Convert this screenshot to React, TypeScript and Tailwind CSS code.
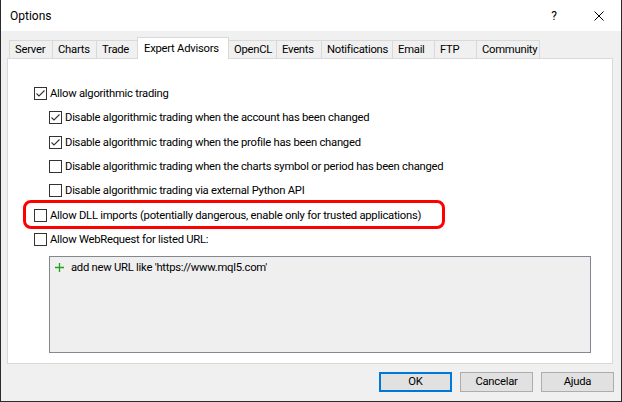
import React from 'react';

const tabs = [
    { label: 'Server', w: 'w-[43px]' },
    { label: 'Charts', w: 'w-[44px]' },
    { label: 'Trade', w: 'w-[41px]' },
    { label: 'Expert Advisors', w: 'w-[92px]', active: true },
    { label: 'OpenCL', w: 'w-[47px]' },
    { label: 'Events', w: 'w-[45px]' },
    { label: 'Notifications', w: 'w-[71px]' },
    { label: 'Email', w: 'w-[42px]' },
    { label: 'FTP', w: 'w-[42px]' },
    { label: 'Community', w: 'w-[64px]' },
];

const options = [
    { label: 'Allow algorithmic trading', checked: true },
    { label: 'Disable algorithmic trading when the account has been changed', checked: true, sub: true },
    { label: 'Disable algorithmic trading when the profile has been changed', checked: true, sub: true },
    { label: 'Disable algorithmic trading when the charts symbol or period has been changed', sub: true },
    { label: 'Disable algorithmic trading via external Python API', sub: true },
    { label: 'Allow DLL imports (potentially dangerous, enable only for trusted applications)', highlight: true },
    { label: 'Allow WebRequest for listed URL:' },
];

const CheckBox: React.FC<{ checked?: boolean }> = ({ checked }) => (
    <span className="w-[13px] h-[13px] shrink-0 border border-[#333333] bg-white flex items-center justify-center">
        {checked && (
            <svg width="11" height="11" viewBox="0 0 11 11">
                <polyline points="1.5,5.5 4,8 9.5,2.5" fill="none" stroke="#333333" strokeWidth="1.1" />
            </svg>
        )}
    </span>
);

const App: React.FC = () => {
    return (
        <div className="w-[622px] h-[402px] bg-[#f0f0f0] border-x border-b border-[#2b2b2b] flex flex-col font-['Roboto','Noto_Sans',sans-serif] text-[11.25px] tracking-[-0.25px] text-black leading-none">
            {/* title bar */}
            <div className="h-[31px] shrink-0 bg-white flex items-center">
                <span className="pl-[9px] text-[12px] tracking-normal">Options</span>
                <span className="ml-auto text-[12px] w-[10px] text-center">?</span>
                <span className="ml-[35px] mr-[17px] w-[10px] h-[10px]">
                    <svg width="10" height="10" viewBox="0 0 10 10">
                        <path d="M0.5 0.5 L9.5 9.5 M9.5 0.5 L0.5 9.5" stroke="#000" strokeWidth="1" />
                    </svg>
                </span>
            </div>

            <div className="flex-1 flex flex-col pl-[6px] pr-[8px]">
                {/* tabs */}
                <div className="flex items-end h-[27px] pl-[2px]">
                    {tabs.map((t, i) => {
                        const prevActive = i > 0 && tabs[i - 1].active;
                        const last = i === tabs.length - 1;
                        return t.active ? (
                            <div
                                key={t.label}
                                className={`${t.w} h-[22px] -mb-px relative z-10 bg-white border-l border-t border-r border-[#d9d9d9] flex items-center pl-[6px]`}
                            >
                                {t.label}
                            </div>
                        ) : (
                            <div
                                key={t.label}
                                className={`${t.w} h-[18px] border-t border-[#d9d9d9] ${prevActive ? '' : 'border-l'} ${last ? 'border-r' : ''} flex items-center pl-[5px] pt-[1px] whitespace-nowrap`}
                            >
                                {t.label}
                            </div>
                        );
                    })}
                </div>

                {/* panel */}
                <div className="h-[306px] shrink-0 bg-white border border-[#d9d9d9] pt-[22.5px] pl-[26px]">
                    {options.map((o) => (
                        <div key={o.label} className={`h-[24.33px] flex items-center ${o.sub ? 'pl-[15px]' : ''}`}>
                            <div className="relative flex items-center gap-[3px]">
                                {o.highlight && (
                                    <span className="absolute -left-[11px] -top-[9px] w-[422px] h-[29px] border-[3px] border-[#ff0000] rounded-[8px] pointer-events-none" />
                                )}
                                <CheckBox checked={o.checked} />
                                <span className="whitespace-nowrap">{o.label}</span>
                            </div>
                        </div>
                    ))}
                    <div className="mt-[4px] ml-[15px] w-[542px] h-[97px] bg-[#efefef] border border-[#828790]">
                        <div className="h-[22px] flex items-center pl-[5px] gap-[7px]">
                            <svg width="9" height="9" viewBox="0 0 9 9">
                                <path d="M4.5 0 V9 M0 4.5 H9" stroke="#1fa31f" strokeWidth="1.3" />
                            </svg>
                            <span>add new URL like 'https://www.mql5.com'</span>
                        </div>
                    </div>
                </div>

                {/* buttons */}
                <div className="mt-[8px] flex justify-end gap-[8px] -mr-px">
                    <button className="w-[73px] h-[20px] bg-[#e1e1e1] border-2 border-[#0078d7] flex items-center justify-center">OK</button>
                    <button className="w-[73px] h-[20px] bg-[#e1e1e1] border border-[#adadad] flex items-center justify-center">Cancelar</button>
                    <button className="w-[73px] h-[20px] bg-[#e1e1e1] border border-[#adadad] flex items-center justify-center">Ajuda</button>
                </div>
            </div>
        </div>
    );
};

export default App;
